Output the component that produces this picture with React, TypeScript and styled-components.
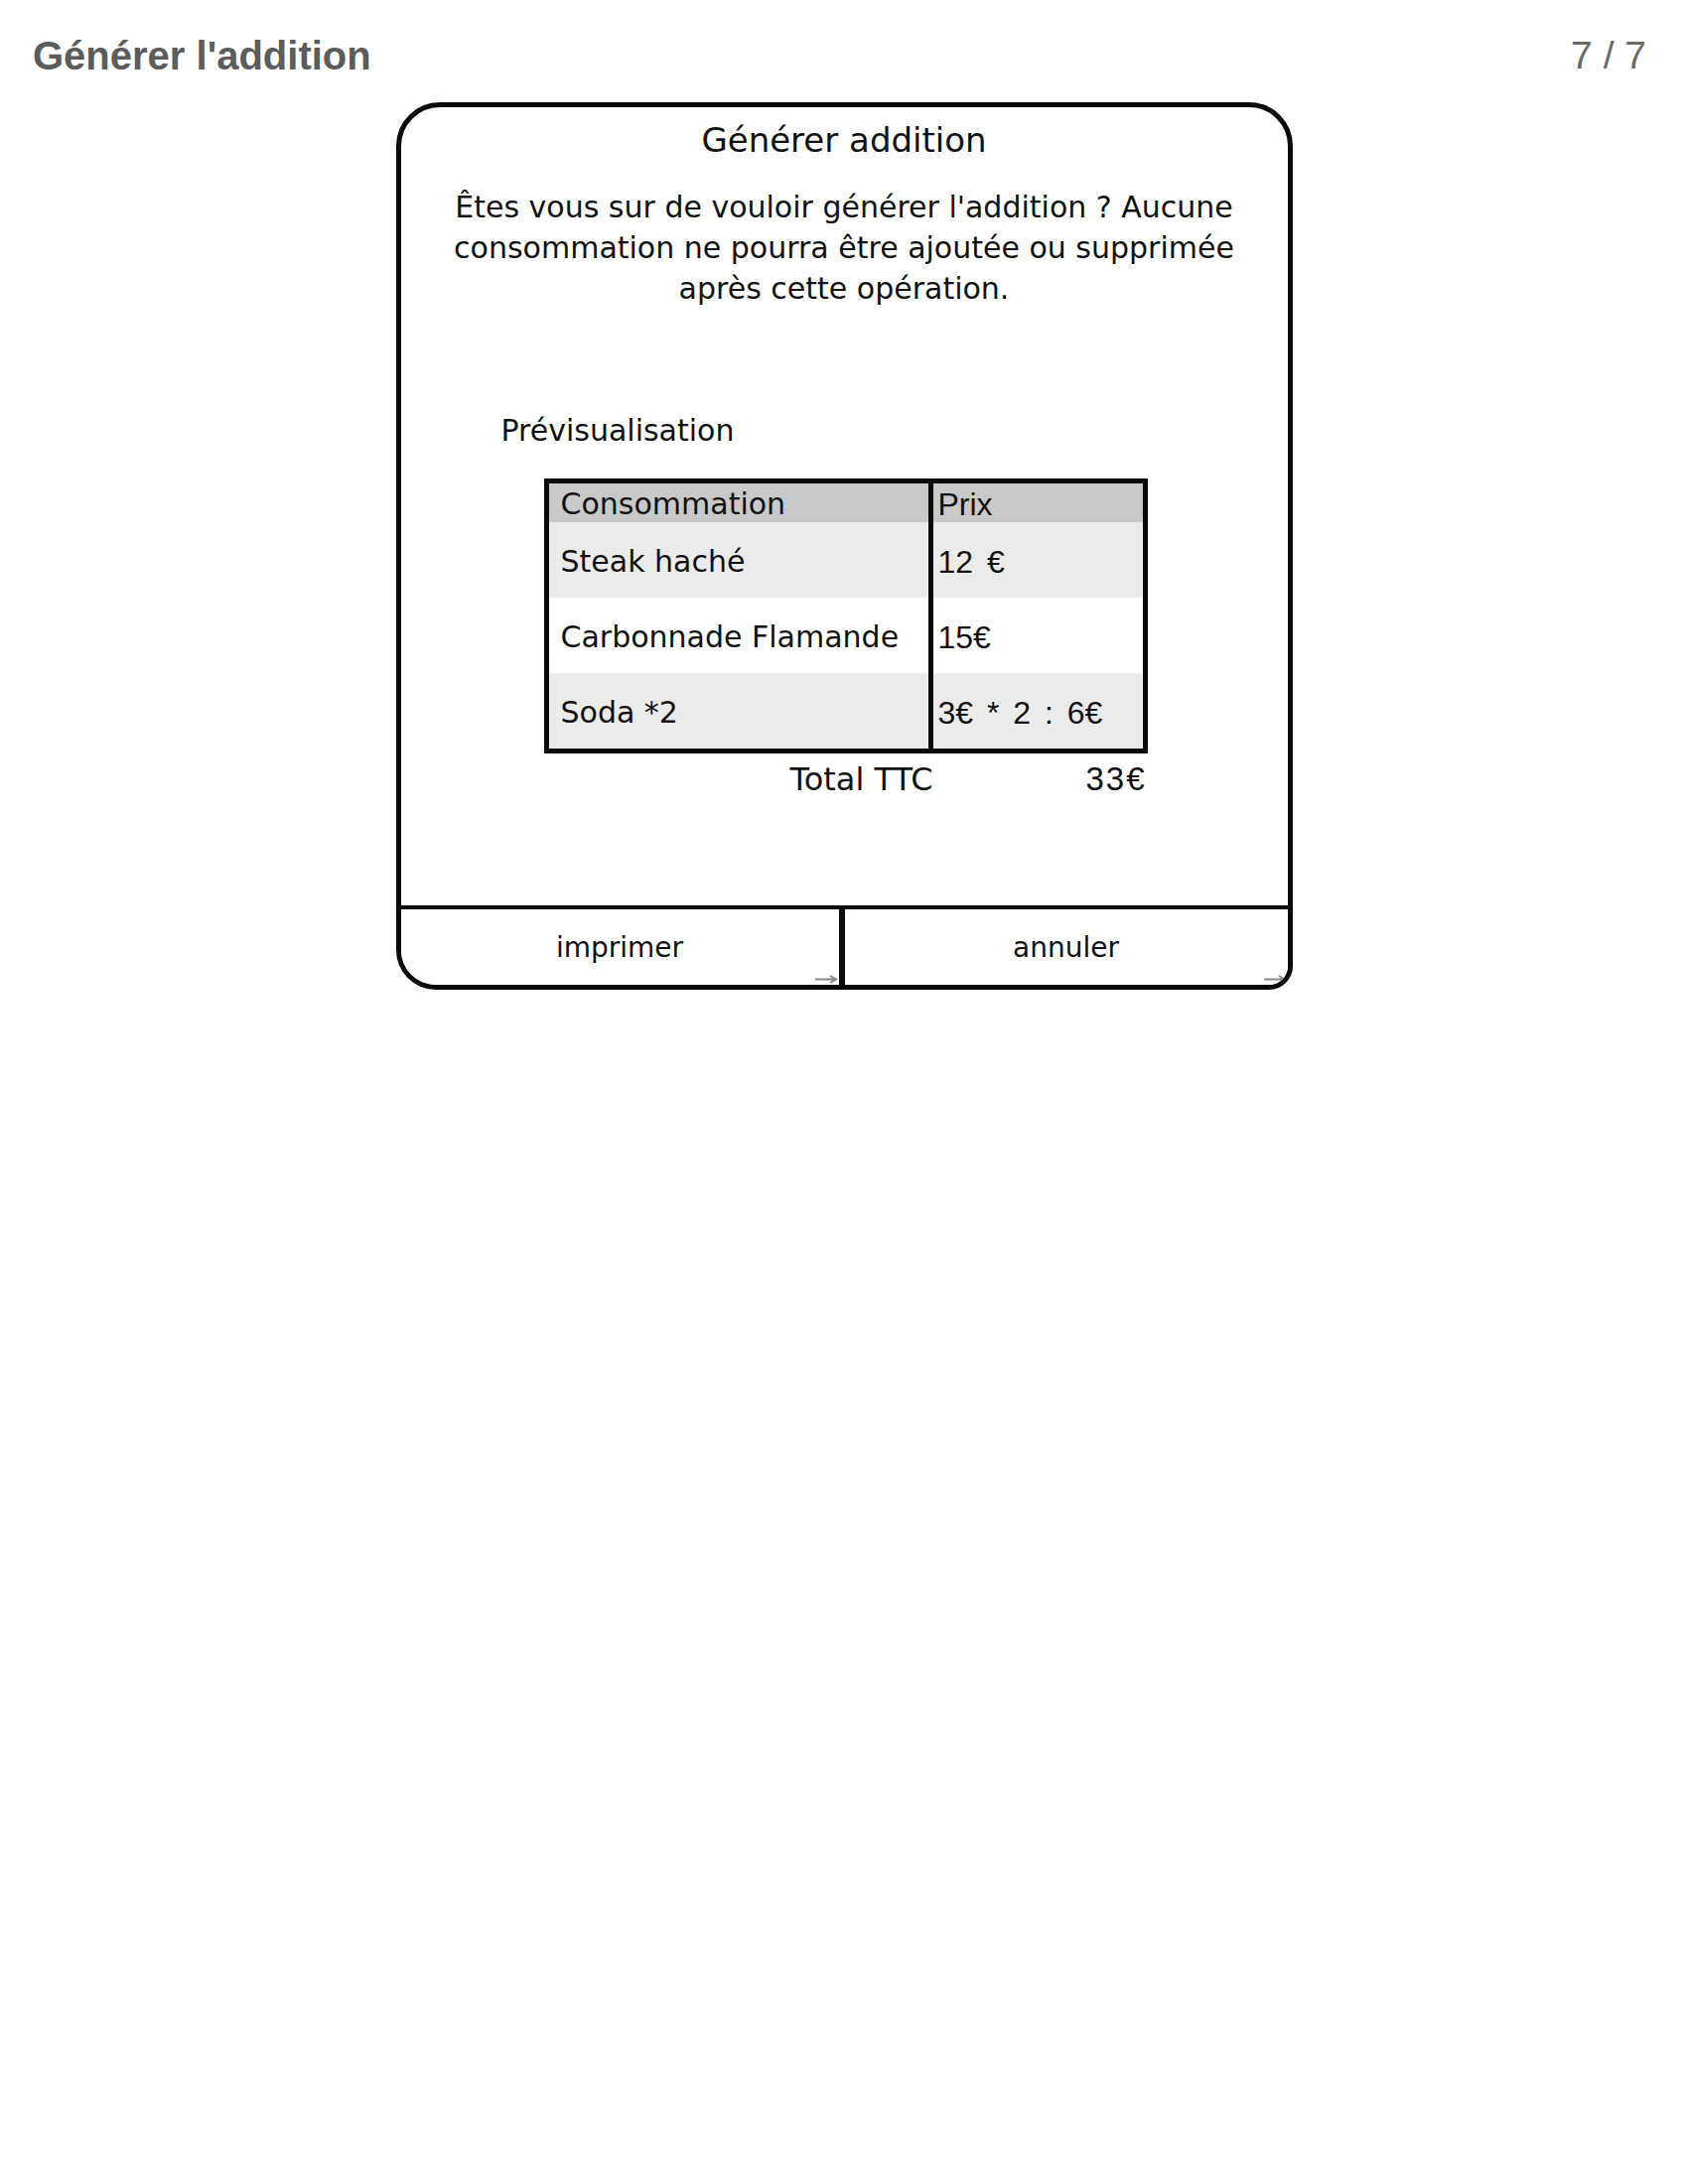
import React from "react";
import styled, { createGlobalStyle } from "styled-components";

const GlobalStyle = createGlobalStyle`
  html, body {
    margin: 0;
    padding: 0;
    background: #ffffff;
  }
  body {
    font-family: "Liberation Sans", Arial, sans-serif;
  }
`;

const sketchFont = `"DejaVu Sans", "Liberation Sans", sans-serif`;

const Page = styled.div`
  width: 1700px;
  min-height: 2200px;
  background: #ffffff;
  display: flex;
  flex-direction: column;
`;

const TopBar = styled.header`
  display: flex;
  justify-content: space-between;
  align-items: flex-start;
  padding: 33px 42px 0 33px;
  height: 46px;
  margin-bottom: 24px;
`;

const PageTitle = styled.h1`
  margin: 0;
  font-family: "Liberation Sans", Arial, sans-serif;
  font-size: 40px;
  line-height: 46px;
  font-weight: 700;
  color: #5c5c5c;
`;

const PageCounter = styled.span`
  font-family: "Liberation Sans", Arial, sans-serif;
  font-size: 39px;
  line-height: 46px;
  color: #6a6a6a;
`;

const Dialog = styled.section`
  align-self: center;
  width: 903px;
  height: 894px;
  box-sizing: border-box;
  border: 5px solid #0a0a0a;
  border-radius: 44px 44px 24px 40px;
  display: flex;
  flex-direction: column;
  overflow: hidden;
  background: #ffffff;
`;

const DialogBody = styled.div`
  flex: 1;
  display: flex;
  flex-direction: column;
  padding-top: 13px;
`;

const DialogTitle = styled.h2`
  margin: 0;
  font-family: ${sketchFont};
  font-size: 34px;
  line-height: 40px;
  font-weight: 400;
  color: #111;
  text-align: center;
`;

const Message = styled.p`
  margin: 27px auto 0;
  width: 820px;
  font-family: ${sketchFont};
  font-size: 30px;
  line-height: 41px;
  color: #111;
  text-align: center;
`;

const SectionLabel = styled.div`
  margin-top: 103px;
  padding-left: 101px;
  font-family: ${sketchFont};
  font-size: 30px;
  line-height: 39px;
  color: #111;
`;

const BillArea = styled.div`
  margin-top: 29px;
  margin-left: 144px;
  width: 608px;
  display: flex;
  flex-direction: column;
`;

const BillTable = styled.div`
  box-sizing: border-box;
  width: 608px;
  border: 5px solid #0a0a0a;
  display: grid;
  grid-template-columns: 382px 5px 211px;
  grid-template-rows: 39px repeat(3, 76px);
`;

const Cell = styled.div<{ $tone: "head" | "shade" | "plain"; $price?: boolean }>`
  display: flex;
  align-items: center;
  padding-top: 3px;
  padding-left: ${(p) => (p.$price ? "5px" : "12px")};
  background: ${(p) =>
    p.$tone === "head" ? "#c9c9c9" : p.$tone === "shade" ? "#ebebeb" : "#ffffff"};
  font-family: ${(p) => (p.$price ? `"Liberation Sans", Arial, sans-serif` : sketchFont)};
  font-size: ${(p) => (p.$price ? "32px" : "30px")};
  word-spacing: ${(p) => (p.$price ? "5px" : "0")};
  line-height: 36px;
  color: #111;
  white-space: nowrap;
`;

const ColumnRule = styled.div`
  grid-column: 2;
  grid-row: 1 / span 4;
  background: #0a0a0a;
`;

const TotalRow = styled.div`
  margin-top: 6px;
  display: grid;
  grid-template-columns: 392px 216px;
  align-items: baseline;
  line-height: 39px;
  color: #111;
`;

const TotalLabel = styled.span`
  font-family: ${sketchFont};
  font-size: 32px;
  text-align: right;
`;

const TotalValue = styled.span`
  font-family: "Liberation Sans", Arial, sans-serif;
  font-size: 33px;
  letter-spacing: 2px;
  text-align: right;
  padding-right: 1px;
`;

const Footer = styled.div`
  height: 80px;
  box-sizing: border-box;
  border-top: 4px solid #0a0a0a;
  display: grid;
  grid-template-columns: 447px 1fr;
`;

const FooterButton = styled.button<{ $divider?: boolean }>`
  position: relative;
  margin: 0;
  padding: 0;
  border: none;
  border-right: ${(p) => (p.$divider ? "6px solid #0a0a0a" : "none")};
  background: #ffffff;
  font-family: ${sketchFont};
  font-size: 28px;
  color: #111;
  cursor: pointer;
  display: flex;
  align-items: center;
  justify-content: center;
`;

const ResizeMark = styled.svg`
  position: absolute;
  right: 0;
  bottom: 1px;
  width: 24px;
  height: 9px;
`;

const Arrow = () => (
  <ResizeMark viewBox="0 0 24 9">
    <path d="M0 4.5 H20 M15 1 L21 4.5 L15 8" stroke="#8a8a8a" strokeWidth="2" fill="none" />
  </ResizeMark>
);

const rows: { item: string; price: string; tone: "shade" | "plain" }[] = [
  { item: "Steak haché", price: "12 €", tone: "shade" },
  { item: "Carbonnade Flamande", price: "15€", tone: "plain" },
  { item: "Soda *2", price: "3€ * 2 : 6€", tone: "shade" },
];

export default function App() {
  return (
    <>
      <GlobalStyle />
      <Page>
        <TopBar>
          <PageTitle>Générer l'addition</PageTitle>
          <PageCounter>7 / 7</PageCounter>
        </TopBar>
        <Dialog>
          <DialogBody>
            <DialogTitle>Générer addition</DialogTitle>
            <Message>
              Êtes vous sur de vouloir générer l'addition ? Aucune consommation ne pourra être
              ajoutée ou supprimée après cette opération.
            </Message>
            <SectionLabel>Prévisualisation</SectionLabel>
            <BillArea>
              <BillTable>
                <Cell $tone="head" style={{ gridColumn: 1, gridRow: 1 }}>
                  Consommation
                </Cell>
                <Cell $tone="head" $price style={{ gridColumn: 3, gridRow: 1 }}>
                  Prix
                </Cell>
                <ColumnRule />
                {rows.map((r, i) => (
                  <React.Fragment key={r.item}>
                    <Cell $tone={r.tone} style={{ gridColumn: 1, gridRow: i + 2 }}>
                      {r.item}
                    </Cell>
                    <Cell $tone={r.tone} $price style={{ gridColumn: 3, gridRow: i + 2 }}>
                      {r.price}
                    </Cell>
                  </React.Fragment>
                ))}
              </BillTable>
              <TotalRow>
                <TotalLabel>Total TTC</TotalLabel>
                <TotalValue>33€</TotalValue>
              </TotalRow>
            </BillArea>
          </DialogBody>
          <Footer>
            <FooterButton $divider>
              imprimer
              <Arrow />
            </FooterButton>
            <FooterButton>
              annuler
              <Arrow />
            </FooterButton>
          </Footer>
        </Dialog>
      </Page>
    </>
  );
}
